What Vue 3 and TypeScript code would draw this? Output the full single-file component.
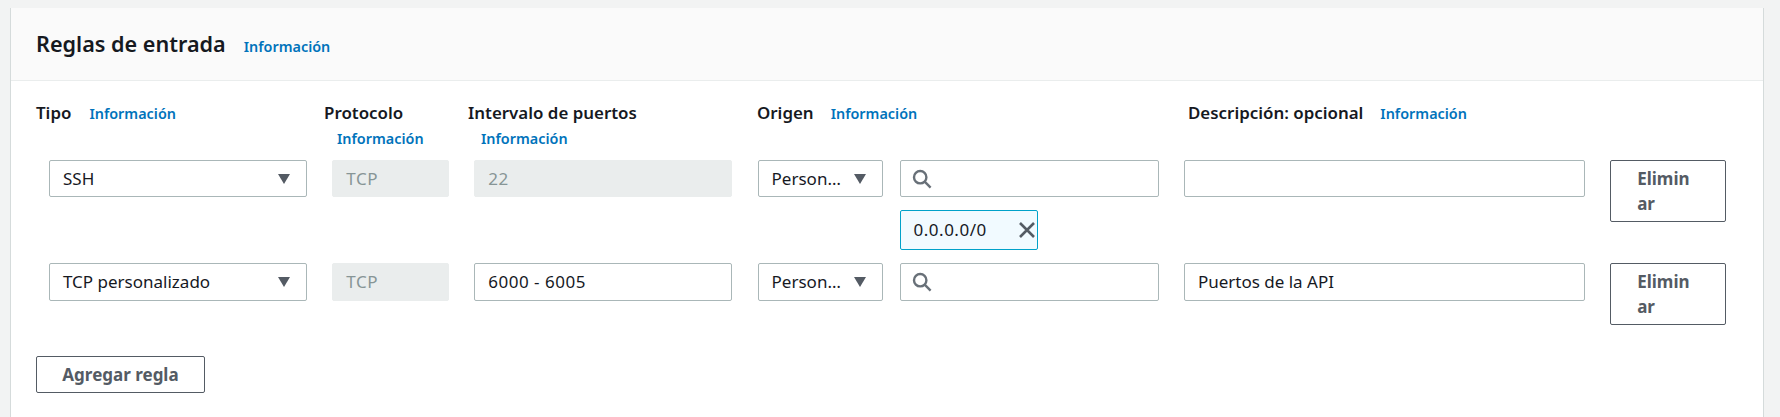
<script setup lang="ts">
interface Rule {
  type: string
  protocol: string
  ports: string
  portsLocked: boolean
  source: string
  tokens: string[]
  description: string
}

const rules: Rule[] = [
  { type: 'SSH', protocol: 'TCP', ports: '22', portsLocked: true, source: 'Person…', tokens: ['0.0.0.0/0'], description: '' },
  { type: 'TCP personalizado', protocol: 'TCP', ports: '6000 - 6005', portsLocked: false, source: 'Person…', tokens: [], description: 'Puertos de la API' },
]
</script>

<template>
  <div class="page">
    <section class="card">
      <header class="card-header">
        <h2 class="card-title">Reglas de entrada</h2>
        <a class="info title-info">Información</a>
      </header>
      <div class="card-body">
        <div class="labels">
          <div class="label-cell">
            <span class="label">Tipo</span>
            <a class="info">Información</a>
          </div>
          <div class="label-cell stacked">
            <span class="label">Protocolo</span>
            <a class="info">Información</a>
          </div>
          <div class="label-cell stacked">
            <span class="label">Intervalo de puertos</span>
            <a class="info">Información</a>
          </div>
          <div class="label-cell">
            <span class="label">Origen</span>
            <a class="info">Información</a>
          </div>
          <div class="label-cell">
            <span class="label">Descripción: opcional</span>
            <a class="info">Información</a>
          </div>
        </div>

        <div v-for="(rule, i) in rules" :key="i" class="rule">
          <div class="field select">
            <span>{{ rule.type }}</span>
            <i class="caret" />
          </div>
          <div class="field locked num">{{ rule.protocol }}</div>
          <div class="field num" :class="{ locked: rule.portsLocked }">{{ rule.ports }}</div>
          <div class="source">
            <div class="field select source-select">
              <span>{{ rule.source }}</span>
              <i class="caret" />
            </div>
            <div class="source-search">
              <div class="field search">
                <svg width="20" height="20" viewBox="0 0 20 20" fill="none" stroke="#687078" stroke-width="2.4">
                  <circle cx="8.2" cy="8.2" r="6.2" />
                  <path d="M12.7 12.7 18.6 18.6" />
                </svg>
              </div>
              <div v-for="token in rule.tokens" :key="token" class="token">
                <span class="num">{{ token }}</span>
                <svg width="18" height="18" viewBox="0 0 18 18" fill="none" stroke="#545b64" stroke-width="2.6">
                  <path d="M2 2 16 16M16 2 2 16" />
                </svg>
              </div>
            </div>
          </div>
          <div class="field">{{ rule.description }}</div>
          <button class="btn remove" type="button">Eliminar</button>
        </div>

        <button class="btn add" type="button">Agregar regla</button>
      </div>
    </section>
  </div>
</template>

<style>
body {
  background: #f2f3f3;
}
</style>

<style scoped>
.page {
  height: 417px;
  padding: 8px 16px 0 10px;
  box-sizing: border-box;
  overflow: hidden;
  font-family: "Noto Sans", sans-serif;
  color: #16191f;
}

.card {
  background: #fff;
  border-left: 1px solid #d5dbdb;
  border-right: 1px solid #d5dbdb;
  height: 409px;
  box-sizing: border-box;
}

.card-header {
  display: flex;
  align-items: baseline;
  height: 73px;
  box-sizing: border-box;
  padding: 21px 0 0 25px;
  background: #fafafa;
  border-bottom: 1px solid #eaeded;
}

.card-title {
  margin: 0;
  font-size: 21.6px;
  line-height: 30px;
  font-weight: 600;
}

.title-info {
  margin-left: 18px;
}

.info {
  color: #0073bb;
  font-size: 14.4px;
  font-weight: 600;
  line-height: 20px;
}

.card-body {
  padding: 20px 0 0 25px;
}

.labels {
  display: grid;
  grid-template-columns: 288px 144px 289px 431px 1fr;
  height: 59px;
}

.label-cell {
  display: flex;
  align-items: baseline;
  gap: 17px;
  height: 24px;
}

.label-cell:first-child {
  gap: 18px;
}

.label-cell.stacked {
  flex-direction: column;
  align-items: flex-start;
  gap: 4px;
  height: auto;
}

.label-cell.stacked .info {
  margin-left: 13px;
}

.label {
  font-size: 16.9px;
  line-height: 24px;
  font-weight: 600;
  white-space: nowrap;
}

.rule {
  display: grid;
  grid-template-columns: 258px 116.7px 258px 401px 401px 116px;
  column-gap: 25.3px;
  align-items: start;
  margin-left: 13px;
  margin-bottom: 13.3px;
}

.field {
  display: flex;
  align-items: center;
  justify-content: space-between;
  height: 37.4px;
  box-sizing: border-box;
  padding: 0 12px 0 13px;
  font-size: 17px;
  background: #fff;
  border: 1px solid #aab7b8;
  border-radius: 2px;
  white-space: nowrap;
}

.field.locked {
  background: #eaeded;
  border-color: #eaeded;
  color: #879596;
}

.num {
  letter-spacing: 0.5px;
}

.caret {
  width: 0;
  height: 0;
  margin-right: 4px;
  border-left: 6.5px solid transparent;
  border-right: 6.5px solid transparent;
  border-top: 10px solid #545b64;
}

.source {
  display: flex;
  gap: 17px;
  align-items: flex-start;
}

.source-select {
  flex: 0 0 125px;
}

.source-select .caret {
  margin-right: 4px;
}

.source-search {
  flex: 1;
  display: flex;
  flex-direction: column;
  align-items: flex-start;
  gap: 12.6px;
}

.search {
  width: 100%;
  justify-content: flex-start;
  padding-left: 11px;
}

.token {
  display: flex;
  align-items: center;
  justify-content: space-between;
  width: 138px;
  height: 40px;
  box-sizing: border-box;
  padding: 0 1px 0 13px;
  font-size: 17px;
  background: #f1faff;
  border: 1px solid #00a1c9;
  border-radius: 2px;
}

.btn {
  display: block;
  box-sizing: border-box;
  background: #fff;
  border: 1px solid #545b64;
  border-radius: 2px;
  color: #545b64;
  font-family: inherit;
  font-size: 17px;
  font-weight: 700;
  line-height: 25px;
  text-align: left;
}

.remove {
  padding: 5px 30px 5.2px 26px;
  word-break: break-all;
}

.add {
  width: 169px;
  height: 37px;
  margin: 31px 0 0 0;
  padding: 0;
  text-align: center;
}
</style>
